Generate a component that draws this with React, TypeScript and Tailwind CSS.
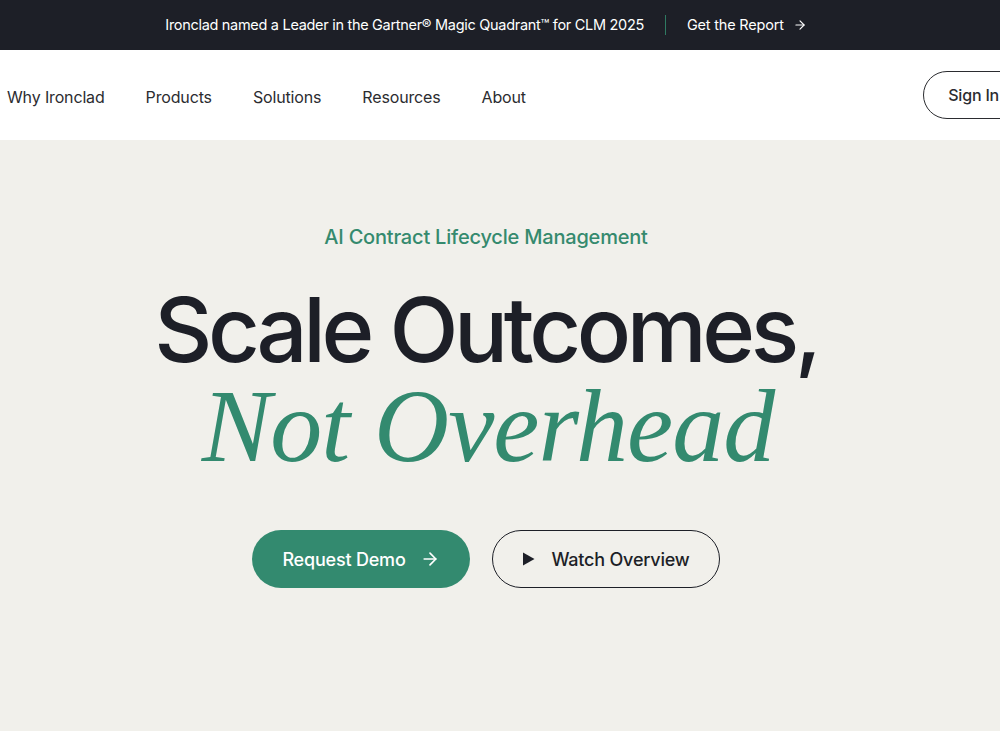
import { ArrowRight } from 'lucide-react';

const navLinks = ['Why Ironclad', 'Products', 'Solutions', 'Resources', 'About'];

function PlayIcon() {
  return (
    <svg className="w-[13px] h-[14px]" viewBox="0 0 13 14" fill="currentColor">
      <path d="M1 0.5 L12.5 7 L1 13.5 Z" />
    </svg>
  );
}

export default function App() {
  return (
    <div className="min-h-screen bg-white font-['Inter',sans-serif] overflow-hidden">
      {/* Announcement bar */}
      <div className="h-[50px] bg-[#1d1f27] flex items-center justify-center pr-[28px] text-white text-[14.5px]">
        <span className="tracking-[-0.3px]">
          Ironclad named a Leader in the Gartner® Magic Quadrant™ for CLM 2025
        </span>
        <span className="mx-[21px] w-px h-[20px] bg-[#2f7a62]" />
        <a className="flex items-center gap-[9px] tracking-[-0.2px]">
          Get the Report
          <ArrowRight className="w-[14px] h-[14px]" strokeWidth={2} />
        </a>
      </div>

      {/* Main nav */}
      <header className="h-[90px] bg-white flex items-center pl-[7px] pt-[3px]">
        <nav className="flex items-center gap-[41px] text-[16px] text-[#2b2c30] tracking-[-0.15px]">
          {navLinks.map((link) => (
            <a key={link} className="cursor-pointer">
              {link}
            </a>
          ))}
        </nav>
        <div className="ml-auto mr-[-40px] -mt-[3px]">
          <button className="h-[48px] pl-[24px] pr-[40px] rounded-full border-[1.5px] border-[#2b2c30] text-[16px] font-medium text-[#2b2c30] whitespace-nowrap tracking-[-0.2px]">
            Sign In
          </button>
        </div>
      </header>

      {/* Hero */}
      <section className="h-[591px] bg-[#f1f0eb] flex flex-col items-center pt-[84px] pr-[28px]">
        <p className="text-[20px] text-[#358a6e] font-medium tracking-[-0.2px] -mt-[2px]">
          AI Contract Lifecycle Management
        </p>
        <h1 className="mt-[30px] flex flex-col items-center">
          <span className="text-[90px] leading-[96px] font-medium text-[#1d1f27] tracking-[-4.4px]">
            Scale Outcomes,
          </span>
          <span className="text-[104px] leading-[96px] italic text-[#338a6f] font-['Liberation_Serif',serif] tracking-[-1px] ml-[4px]">
            Not Overhead
          </span>
        </h1>
        <div className="mt-[56px] flex items-center gap-[22px]">
          <button className="h-[58px] w-[218px] rounded-full bg-[#338a6f] text-white text-[18px] font-medium flex items-center justify-center gap-[14px] tracking-[-0.2px]">
            Request Demo
            <ArrowRight className="w-[20px] h-[20px]" strokeWidth={2} />
          </button>
          <button className="h-[58px] w-[228px] rounded-full border-[1.5px] border-[#1d1f27] text-[#1d1f27] text-[18px] font-medium flex items-center justify-center gap-[16px] tracking-[-0.2px]">
            <PlayIcon />
            Watch Overview
          </button>
        </div>
      </section>
    </div>
  );
}
